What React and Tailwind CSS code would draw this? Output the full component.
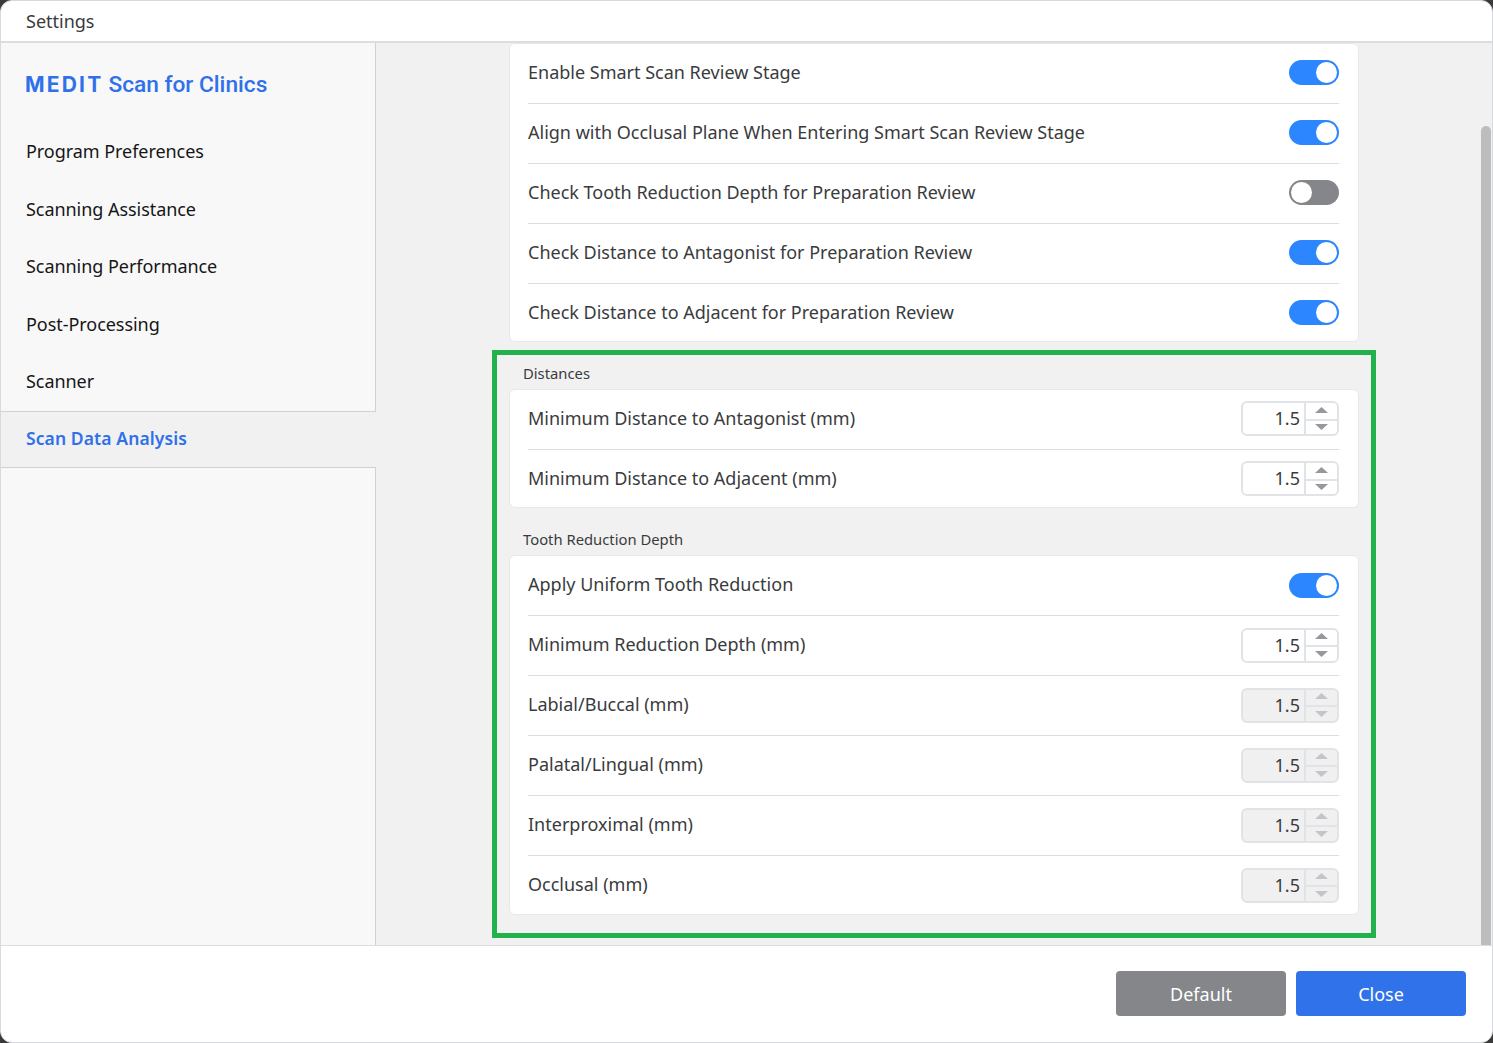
import React from "react";

function Toggle({ on = true }) {
  return (
    <div className={`flex h-[25px] w-[50px] items-center rounded-full px-[2px] ${on ? "justify-end bg-[#2b86ff]" : "justify-start bg-[#85868a]"}`}>
      <div className="h-[21px] w-[21px] rounded-full bg-white" />
    </div>
  );
}

function Spinner({ disabled = false }) {
  const arrow = disabled ? "#c4c5c8" : "#97989b";
  return (
    <div className={`flex h-[35px] w-[98px] rounded-[6px] border-2 border-[#e2e3e7] ${disabled ? "bg-[#f0f0f1]" : "bg-white"}`}>
      <div className="flex flex-1 items-center justify-end pb-[1px] pr-[4px] text-[18px] leading-none text-[#3a3b3d]">1.5</div>
      <div className="flex w-[33px] flex-col border-l-2 border-[#e2e3e7]">
        <div className="flex flex-1 items-center justify-center border-b-2 border-[#e2e3e7] pb-[2px]">
          <svg width="13" height="6" viewBox="0 0 13 6"><path d="M6.5 0 13 6H0z" fill={arrow} /></svg>
        </div>
        <div className="flex flex-1 items-center justify-center">
          <svg width="13" height="6" viewBox="0 0 13 6"><path d="M0 0h13L6.5 6z" fill={arrow} /></svg>
        </div>
      </div>
    </div>
  );
}

function Row({ label, last, tall, lift = "mb-[2px]", children }) {
  return (
    <div className="pl-[18px] pr-[19px]">
      <div className={`flex items-center justify-between ${last ? (tall ? "h-[58px]" : "h-[57px]") : "h-[60px] border-b border-[#dcdde0]"}`}>
        <span className={`text-[18px] text-[#3a3b3d] ${last && !tall ? "" : "mb-[2px]"}`}>{label}</span>
        <div className={last ? "" : lift}>{children}</div>
      </div>
    </div>
  );
}

function Card({ children }) {
  return <div className="rounded-[6px] border border-[#e8e8ea] bg-white">{children}</div>;
}

const nav = ["Program Preferences", "Scanning Assistance", "Scanning Performance", "Post-Processing", "Scanner"];

export default function App() {
  return (
    <div className="h-[1043px] w-[1493px] overflow-hidden bg-[#3a3a3a] font-['Noto_Sans',sans-serif]">
      <div className="relative flex h-[1043px] flex-col overflow-hidden rounded-[12px] border border-[#d9dade] bg-white">
        <div className="flex h-[42px] shrink-0 items-center border-b-2 border-[#dcdde0] pl-[25px] pt-[1px] text-[18px] text-[#3a3b3d]">Settings</div>

        <div className="flex h-[902px] shrink-0 bg-[#f1f1f1]">
          <div className="flex w-[375px] shrink-0 flex-col">
            <div className="flex h-[80px] items-baseline border-r border-[#d0d1d4] bg-[#f8f8f8] pl-[24px] pt-[25px] text-[22.7px] text-[#3070ea]">
              <span className="mr-[5px] font-['Inter',sans-serif] text-[21px] font-bold tracking-[2.2px]">MEDIT</span>
              <span className="font-['Roboto',sans-serif] font-medium">Scan for Clinics</span>
            </div>
            {nav.map((item) => (
              <div key={item} className="flex h-[57.5px] items-center border-r border-[#d0d1d4] bg-[#f8f8f8] pl-[25px] text-[18px] tracking-[-0.05px] text-[#161616]">{item}</div>
            ))}
            <div className="flex h-[57px] items-center border-y border-[#d0d1d4] pb-[2px] pl-[25px] text-[17.5px] font-semibold tracking-[0.1px] text-[#3070ea]">Scan Data Analysis</div>
            <div className="flex-1 border-r border-[#d0d1d4] bg-[#f8f8f8]" />
          </div>

          <div className="ml-[133px] w-[850px] shrink-0">
            <Card>
              <Row label="Enable Smart Scan Review Stage"><Toggle /></Row>
              <Row label="Align with Occlusal Plane When Entering Smart Scan Review Stage"><Toggle /></Row>
              <Row label="Check Tooth Reduction Depth for Preparation Review"><Toggle on={false} /></Row>
              <Row label="Check Distance to Antagonist for Preparation Review"><Toggle /></Row>
              <Row label="Check Distance to Adjacent for Preparation Review" last><Toggle /></Row>
            </Card>

            <div className="ml-[-17px] mr-[-17px] mt-[8px] h-[588px] border-[5px] border-[#22b14c] px-[12px]">
              <div className="flex h-[34px] items-center pl-[14px] pt-[2px] text-[14.8px] text-[#3a3b3d]">Distances</div>
              <Card>
                <Row label="Minimum Distance to Antagonist (mm)"><Spinner /></Row>
                <Row label="Minimum Distance to Adjacent (mm)" last><Spinner /></Row>
              </Card>
              <div className="flex h-[47px] items-end pb-[5px] pl-[14px] text-[14.8px] text-[#3a3b3d]">Tooth Reduction Depth</div>
              <Card>
                <Row label="Apply Uniform Tooth Reduction" lift="mb-[1px]"><Toggle /></Row>
                <Row label="Minimum Reduction Depth (mm)" lift="mb-[1px]"><Spinner /></Row>
                <Row label="Labial/Buccal (mm)" lift="mb-[1px]"><Spinner disabled /></Row>
                <Row label="Palatal/Lingual (mm)" lift="mb-[1px]"><Spinner disabled /></Row>
                <Row label="Interproximal (mm)" lift="mb-[1px]"><Spinner disabled /></Row>
                <Row label="Occlusal (mm)" last tall><Spinner disabled /></Row>
              </Card>
            </div>
          </div>

          {/* scrollbar sits over the content */}
          <div className="absolute right-[1px] top-[125px] h-[819px] w-[10px] rounded-t-full bg-[#bdbdbd]" />
        </div>

        <div className="flex flex-1 items-center justify-end gap-[10px] border-t border-[#dcdde0] pb-[2px] pr-[26px]">
          <button className="h-[45px] w-[170px] rounded-[4px] bg-[#85868a] pt-[2px] text-[18px] text-white">Default</button>
          <button className="h-[45px] w-[170px] rounded-[4px] bg-[#3072ea] pt-[2px] text-[18px] text-white">Close</button>
        </div>
      </div>
    </div>
  );
}
